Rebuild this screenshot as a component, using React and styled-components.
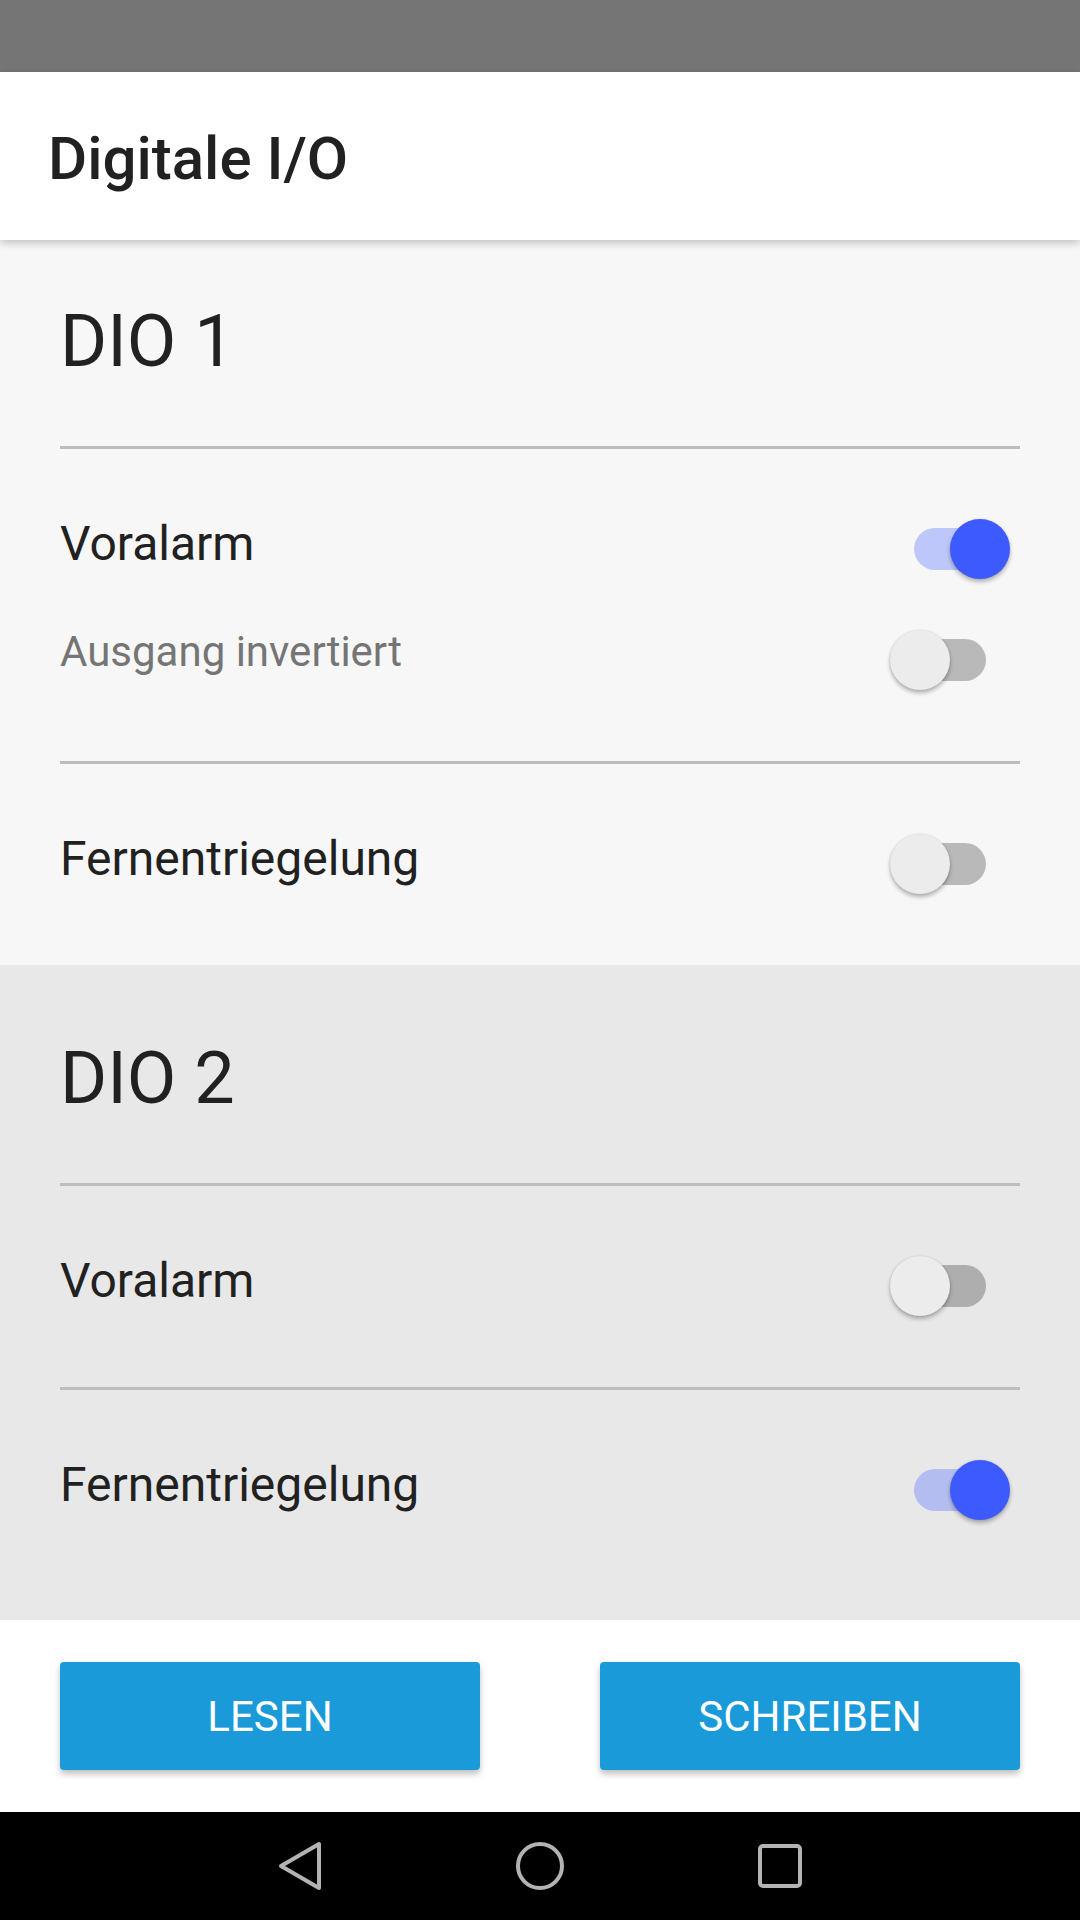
import React from 'react';
import styled, { createGlobalStyle } from 'styled-components';

const Global = createGlobalStyle`
  html, body { margin: 0; padding: 0; background: #fff; }
  body { font-family: Roboto, "Noto Sans", "Liberation Sans", sans-serif; }
  * { box-sizing: border-box; }
`;

const Screen = styled.div`
  width: 1080px;
  height: 1920px;
  display: flex;
  flex-direction: column;
  overflow: hidden;
  background: #fff;
`;

const StatusBar = styled.div`
  height: 72px;
  flex-shrink: 0;
  background: #757575;
`;

const AppBar = styled.header`
  height: 168px;
  flex-shrink: 0;
  display: flex;
  align-items: center;
  padding: 5px 0 0 48px;
  background: #fff;
  box-shadow: 0 3px 8px rgba(0, 0, 0, 0.22);
  position: relative;
  z-index: 1;
`;

const Title = styled.h1`
  margin: 0;
  font-size: 60px;
  font-weight: 500;
  line-height: 70px;
  color: #212121;
`;

const Section = styled.section`
  flex-shrink: 0;
  background: ${(p) => p.$bg};
  padding: ${(p) => p.$pt}px 60px ${(p) => p.$pb}px;
`;

const Heading = styled.h2`
  margin: 0 0 62px;
  font-size: 72px;
  font-weight: 400;
  line-height: 84px;
  color: #212121;
`;

const Divider = styled.hr`
  margin: 0;
  border: none;
  height: 3px;
  background: #bdbdbd;
`;

const Group = styled.div`
  display: flex;
  flex-direction: column;
  gap: 51px;
  padding: 70px 0 71px;
`;

const Row = styled.div`
  height: 60px;
  display: flex;
  align-items: center;
  justify-content: space-between;
`;

const Label = styled.span`
  font-size: ${(p) => (p.$sub ? 42 : 48)}px;
  color: ${(p) => (p.$sub ? '#757575' : '#212121')};
  margin-bottom: ${(p) => (p.$sub ? 17 : 11)}px;
`;

const Toggle = styled.div`
  position: relative;
  width: 120px;
  height: 60px;
  margin-right: 10px;
  flex-shrink: 0;
`;

const Track = styled.div`
  position: absolute;
  left: 24px;
  top: 9px;
  width: 72px;
  height: 42px;
  border-radius: 21px;
  background: ${(p) => (p.$on ? 'rgba(61, 90, 254, 0.3)' : 'rgba(0, 0, 0, 0.25)')};
`;

const Thumb = styled.div`
  position: absolute;
  top: 0;
  left: ${(p) => (p.$on ? 60 : 0)}px;
  width: 60px;
  height: 60px;
  border-radius: 50%;
  background: ${(p) => (p.$on ? '#3d5afe' : '#ececec')};
  box-shadow: 0 3px 4px rgba(0, 0, 0, 0.28), 0 0 2px rgba(0, 0, 0, 0.12);
`;

const ButtonBar = styled.div`
  height: 192px;
  flex-shrink: 0;
  display: grid;
  grid-template-columns: 1fr 1fr;
  column-gap: 120px;
  padding: 42px 60px;
  background: #fff;
`;

const Button = styled.button`
  height: 108px;
  border: none;
  border-radius: 4px;
  background: #1a9ad9;
  color: #fff;
  font-family: Roboto, "Noto Sans", sans-serif;
  font-size: 42px;
  font-weight: 400;
  text-transform: uppercase;
  box-shadow: 0 4px 6px rgba(0, 0, 0, 0.25);
  cursor: pointer;
`;

const NavBar = styled.nav`
  height: 108px;
  flex-shrink: 0;
  background: #000;
  display: grid;
  grid-template-columns: repeat(3, 240px);
  justify-content: center;
  align-items: center;
  justify-items: center;
`;

const NavIcon = styled.svg`
  display: block;
  fill: none;
  stroke: #b3b3b3;
  stroke-width: 4;
  stroke-linejoin: round;
`;

function Switch({ on }) {
  return (
    <Toggle>
      <Track $on={on} />
      <Thumb $on={on} />
    </Toggle>
  );
}

function SettingRow({ label, on, sub }) {
  return (
    <Row>
      <Label $sub={sub}>{label}</Label>
      <Switch on={on} />
    </Row>
  );
}

export default function App() {
  return (
    <>
      <Global />
      <Screen>
        <StatusBar />
        <AppBar>
          <Title>Digitale I/O</Title>
        </AppBar>

        <Section $bg="#f7f7f7" $pt={60} $pb={0}>
          <Heading>DIO 1</Heading>
          <Divider />
          <Group>
            <SettingRow label="Voralarm" on />
            <SettingRow label="Ausgang invertiert" sub />
          </Group>
          <Divider />
          <Group>
            <SettingRow label="Fernentriegelung" />
          </Group>
        </Section>

        <Section $bg="#e8e8e8" $pt={72} $pb={29}>
          <Heading>DIO 2</Heading>
          <Divider />
          <Group>
            <SettingRow label="Voralarm" />
          </Group>
          <Divider />
          <Group>
            <SettingRow label="Fernentriegelung" on />
          </Group>
        </Section>

        <ButtonBar>
          <Button>Lesen</Button>
          <Button>Schreiben</Button>
        </ButtonBar>

        <NavBar>
          <NavIcon width="48" height="52" viewBox="0 0 48 52">
            <polygon points="5,26 43,4 43,48" />
          </NavIcon>
          <NavIcon width="52" height="52" viewBox="0 0 52 52">
            <circle cx="26" cy="26" r="22" />
          </NavIcon>
          <NavIcon width="48" height="48" viewBox="0 0 48 48">
            <rect x="4" y="4" width="40" height="40" rx="3" />
          </NavIcon>
        </NavBar>
      </Screen>
    </>
  );
}
